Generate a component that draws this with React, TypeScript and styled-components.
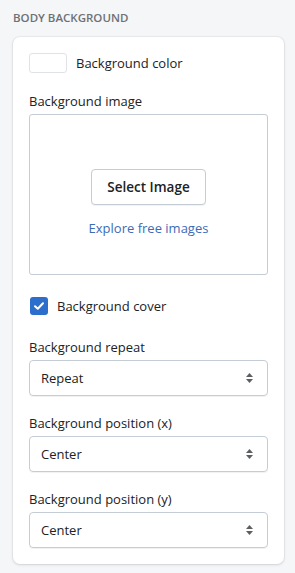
import React from "react";
import styled, { createGlobalStyle } from "styled-components";

const Global = createGlobalStyle`
  *, *::before, *::after { box-sizing: border-box; }
  html, body { margin: 0; padding: 0; background: #f4f6f8; }
  body { font-family: "Open Sans", "Noto Sans", sans-serif; color: #202223; }
`;

const Page = styled.div`
  padding: 10px 11px 9px 13px;
  display: flex;
  flex-direction: column;
`;

const SectionTitle = styled.div`
  font-size: 11.5px;
  font-weight: 600;
  color: #6d7175;
  text-transform: uppercase;
  line-height: 16px;
  margin-bottom: 11px;
`;

const Card = styled.div`
  background: #fff;
  border-radius: 7px;
  box-shadow: 0 0 0 1px rgba(63, 63, 68, 0.05), 0 1px 3px rgba(63, 63, 68, 0.15);
  padding: 16px;
  display: flex;
  flex-direction: column;
`;

const InlineRow = styled.div<{ $top?: number }>`
  display: flex;
  align-items: center;
  gap: 9px;
  height: 20px;
  margin-top: ${(p) => p.$top ?? 0}px;
`;

const Swatch = styled.div`
  width: 38px;
  height: 20px;
  border: 1px solid #dfe3e8;
  border-radius: 3px;
  background: #fff;
`;

const Text = styled.span`
  font-size: 13px;
  line-height: 20px;
  color: #202223;
`;

const Label = styled.div<{ $top: number }>`
  font-size: 13px;
  line-height: 20px;
  color: #202223;
  margin-top: ${(p) => p.$top}px;
  margin-bottom: 3px;
`;

const DropZone = styled.div`
  height: 161px;
  border: 1px solid #c4cdd5;
  border-radius: 3px;
  display: flex;
  flex-direction: column;
  align-items: center;
  padding-top: 54px;
  gap: 13px;
`;

const Button = styled.button`
  width: 115px;
  height: 36px;
  border: 1px solid #c4cdd5;
  border-radius: 4px;
  background: #fff;
  font-family: inherit;
  font-size: 13.5px;
  font-weight: 600;
  color: #202223;
  box-shadow: 0 1px 0 rgba(0, 0, 0, 0.05);
  padding: 0;
`;

const Link = styled.a`
  font-size: 13px;
  line-height: 20px;
  color: #3d6bb5;
  text-decoration: none;
`;

const CheckBox = styled.div`
  width: 18px;
  height: 18px;
  border-radius: 3px;
  background: #2c6ecb;
  display: flex;
  align-items: center;
  justify-content: center;
  margin-left: 1px;
`;

const SelectBox = styled.div`
  height: 36px;
  border: 1px solid #c4cdd5;
  border-radius: 4px;
  display: flex;
  align-items: center;
  justify-content: space-between;
  padding: 0 13px 0 11px;
  box-shadow: 0 1px 0 rgba(0, 0, 0, 0.05);
`;

const Arrows = () => (
  <svg width="9" height="14" viewBox="0 0 9 14">
    <path d="M4.5 2 L8 6 H1 Z" fill="#5c5f62" />
    <path d="M4.5 12 L8 8 H1 Z" fill="#5c5f62" />
  </svg>
);

const Select = ({ value }: { value: string }) => (
  <SelectBox>
    <Text>{value}</Text>
    <Arrows />
  </SelectBox>
);

export default function App() {
  return (
    <>
      <Global />
      <Page>
        <SectionTitle>Body background</SectionTitle>
        <Card>
          <InlineRow>
            <Swatch />
            <Text>Background color</Text>
          </InlineRow>
          <Label $top={18}>Background image</Label>
          <DropZone>
            <Button>Select Image</Button>
            <Link href="#">Explore free images</Link>
          </DropZone>
          <InlineRow $top={21}>
            <CheckBox>
              <svg width="12" height="10" viewBox="0 0 12 10">
                <path d="M2 5.2 L4.8 7.8 L10 2.2" stroke="#fff" strokeWidth="2" fill="none" strokeLinecap="round" strokeLinejoin="round" />
              </svg>
            </CheckBox>
            <Text>Background cover</Text>
          </InlineRow>
          <Label $top={21}>Background repeat</Label>
          <Select value="Repeat" />
          <Label $top={17}>Background position (x)</Label>
          <Select value="Center" />
          <Label $top={17}>Background position (y)</Label>
          <Select value="Center" />
        </Card>
      </Page>
    </>
  );
}
